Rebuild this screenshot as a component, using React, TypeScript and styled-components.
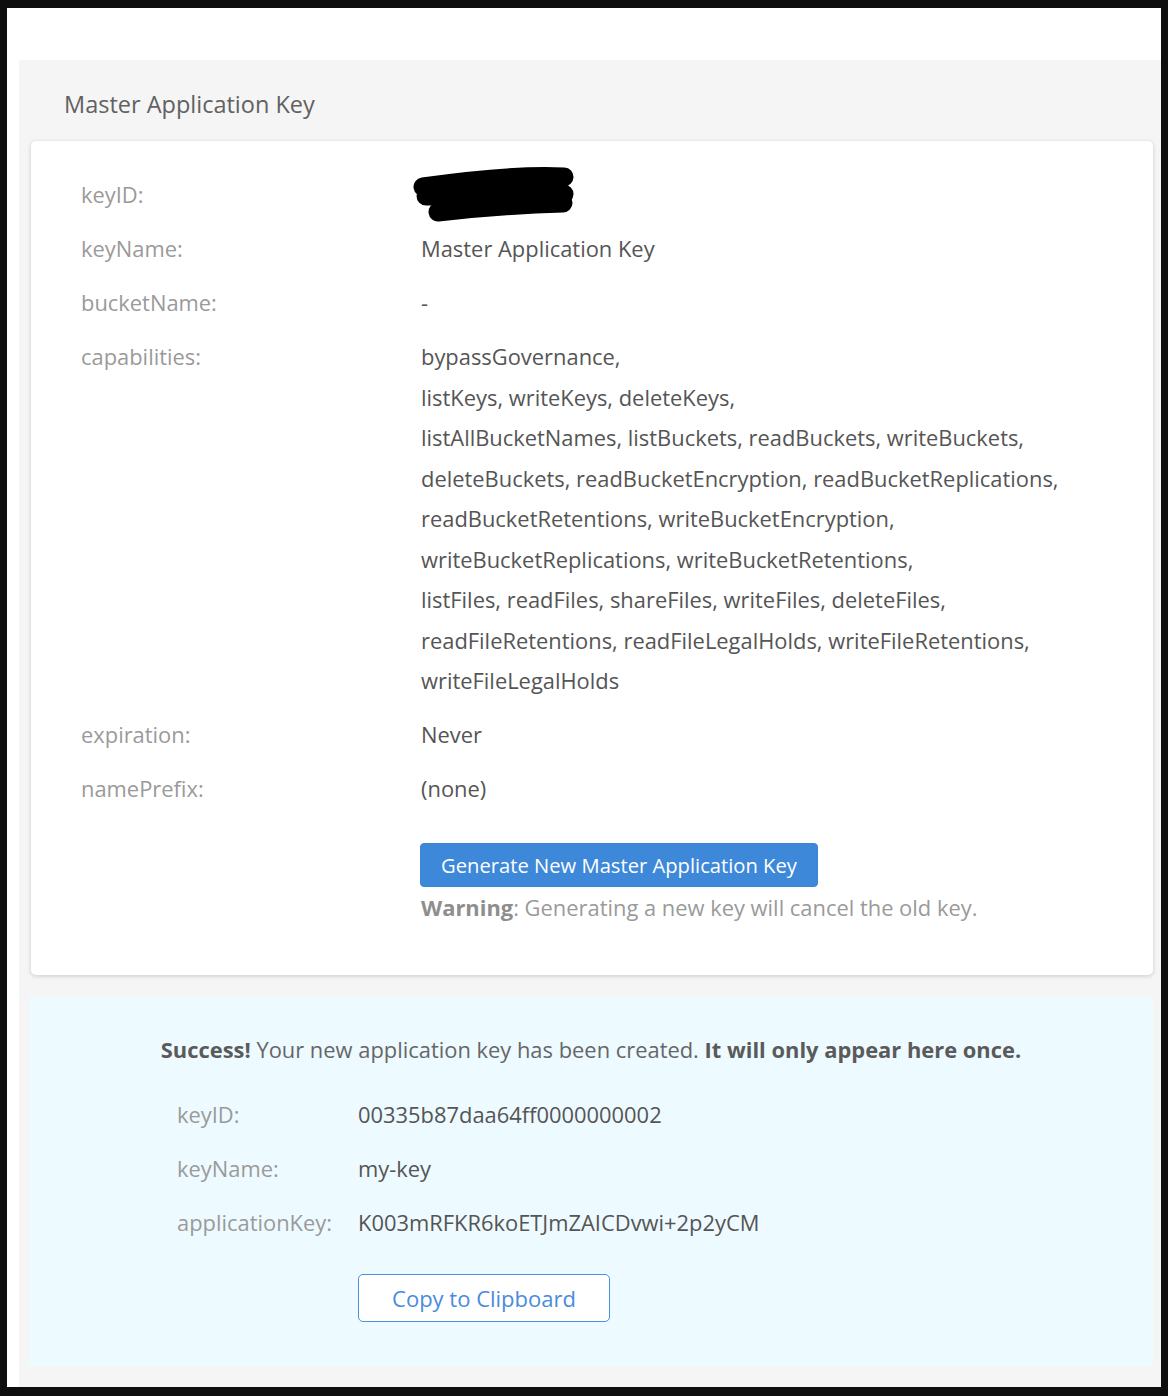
import React from "react";
import styled, { createGlobalStyle } from "styled-components";

const GlobalStyle = createGlobalStyle`
  html, body {
    margin: 0;
    padding: 0;
    background: #0e0e0e;
  }
  body {
    font-family: "Open Sans", "Liberation Sans", sans-serif;
  }
  * {
    box-sizing: border-box;
  }
`;

const capabilities = [
  "bypassGovernance,",
  "listKeys, writeKeys, deleteKeys,",
  "listAllBucketNames, listBuckets, readBuckets, writeBuckets,",
  "deleteBuckets, readBucketEncryption, readBucketReplications,",
  "readBucketRetentions, writeBucketEncryption,",
  "writeBucketReplications, writeBucketRetentions,",
  "listFiles, readFiles, shareFiles, writeFiles, deleteFiles,",
  "readFileRetentions, readFileLegalHolds, writeFileRetentions,",
  "writeFileLegalHolds",
];

const Redacted = () => (
  <Scribble width="164" height="58" viewBox="0 0 164 58">
    <g stroke="#000" strokeLinecap="round" strokeWidth="19" fill="none">
      <path d="M11 21 C 60 14, 110 9, 152 11" />
      <path d="M14 30 C 60 30, 110 27, 152 28" />
      <path d="M26 46 C 70 41, 115 38, 151 37" />
    </g>
  </Scribble>
);

export default function App() {
  return (
    <>
      <GlobalStyle />
      <Frame>
        <Page>
          <Panel>
            <Title>Master Application Key</Title>
            <Card>
              <Row>
                <Label>keyID:</Label>
                <Value>
                  <Redacted />
                </Value>
              </Row>
              <Row>
                <Label>keyName:</Label>
                <Value>Master Application Key</Value>
              </Row>
              <Row>
                <Label>bucketName:</Label>
                <Value>-</Value>
              </Row>
              <Row>
                <Label>capabilities:</Label>
                <Value>
                  {capabilities.map((line) => (
                    <CapLine key={line}>{line}</CapLine>
                  ))}
                </Value>
              </Row>
              <Row>
                <Label>expiration:</Label>
                <Value>Never</Value>
              </Row>
              <Row>
                <Label>namePrefix:</Label>
                <Value>(none)</Value>
              </Row>
              <Actions>
                <PrimaryButton>Generate New Master Application Key</PrimaryButton>
                <Warning>
                  <b>Warning</b>: Generating a new key will cancel the old key.
                </Warning>
              </Actions>
            </Card>

            <SuccessBox>
              <SuccessText>
                <b>Success!</b> Your new application key has been created.{" "}
                <b>It will only appear here once.</b>
              </SuccessText>
              <KeyList>
                <KeyRow>
                  <KeyLabel>keyID:</KeyLabel>
                  <KeyValue>00335b87daa64ff0000000002</KeyValue>
                </KeyRow>
                <KeyRow>
                  <KeyLabel>keyName:</KeyLabel>
                  <KeyValue>my-key</KeyValue>
                </KeyRow>
                <KeyRow>
                  <KeyLabel>applicationKey:</KeyLabel>
                  <KeyValue>K003mRFKR6koETJmZAICDvwi+2p2yCM</KeyValue>
                </KeyRow>
              </KeyList>
              <CopyButton>Copy to Clipboard</CopyButton>
            </SuccessBox>
          </Panel>
        </Page>
      </Frame>
    </>
  );
}

const Frame = styled.div`
  padding: 8px 7px 9px 7px;
  background: #0e0e0e;
`;

const Page = styled.div`
  background: #fff;
  padding: 52px 0 0 12px;
`;

const Panel = styled.section`
  background: #f5f5f5;
  padding: 29px 8px 21px 10px;
`;

const Title = styled.h2`
  margin: 0 0 22px 35px;
  font-size: 23.5px;
  line-height: 30px;
  font-weight: 400;
  color: #616161;
`;

const Card = styled.div`
  margin: 0 0 0 2px;
  background: #fff;
  border-radius: 5px;
  box-shadow: 0 1px 4px rgba(0, 0, 0, 0.18);
  padding: 34px 50px 52px 50px;
`;

const Row = styled.div`
  display: grid;
  grid-template-columns: 340px 1fr;
  margin-bottom: 13.5px;
  font-size: 21.9px;
  line-height: 40.5px;
`;

const Label = styled.div`
  color: #9a9a9a;
`;

const Value = styled.div`
  color: #555;
`;

const CapLine = styled.div`
  white-space: nowrap;
`;

const Scribble = styled.svg`
  display: block;
  margin: -9px 0 -8.5px -9px;
`;

const Actions = styled.div`
  margin: 33px 0 0 340px;
  display: flex;
  flex-direction: column;
  align-items: flex-start;
`;

const PrimaryButton = styled.button`
  height: 44px;
  width: 398px;
  margin-left: -1px;
  padding: 0;
  background: #3d88d8;
  color: #fff;
  border: 1px solid #3a84d3;
  border-radius: 4px;
  font-family: "Open Sans", "Liberation Sans", sans-serif;
  font-size: 20.2px;
  cursor: pointer;
`;

const Warning = styled.div`
  margin-top: 6px;
  font-size: 21.9px;
  line-height: 30px;
  color: #9a9a9a;

  b {
    font-weight: 700;
    color: #8e8e8e;
  }
`;

const SuccessBox = styled.div`
  margin-top: 22px;
  background: #edfaff;
  padding: 38px 0 44px 148px;
`;

const SuccessText = styled.p`
  margin: 0 0 30px -148px;
  text-align: center;
  font-size: 21.9px;
  line-height: 30px;
  color: #666;

  b {
    font-weight: 700;
    color: #5a5a5a;
  }
`;

const KeyList = styled.div`
  display: flex;
  flex-direction: column;
  gap: 13.5px;
`;

const KeyRow = styled.div`
  display: grid;
  grid-template-columns: 181px 1fr;
  font-size: 21.9px;
  line-height: 40.5px;
`;

const KeyLabel = styled.div`
  color: #9a9a9a;
`;

const KeyValue = styled.div`
  color: #555;
`;

const CopyButton = styled.button`
  margin: 31px 0 0 181px;
  width: 252px;
  height: 48px;
  background: #fff;
  border: 1px solid #4a90e2;
  border-radius: 5px;
  color: #4a8bdc;
  font-family: "Open Sans", "Liberation Sans", sans-serif;
  font-size: 22px;
  cursor: pointer;
`;
